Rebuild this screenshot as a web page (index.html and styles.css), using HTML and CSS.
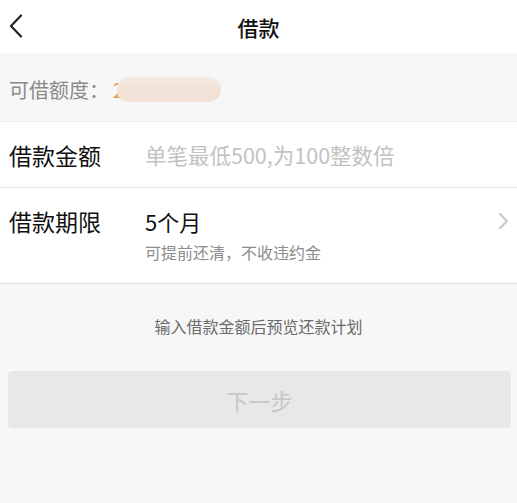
FILE: index.html
```html
<!DOCTYPE html>
<html lang="zh-CN">
<head>
    <meta charset="UTF-8">
    <meta name="viewport" content="width=device-width, initial-scale=1.0">
    <title>借款</title>
    <link rel="stylesheet" href="styles.css">
</head>
<body>
    <header class="nav">
        <span class="nav-back">
            <svg width="14" height="24" viewBox="0 0 14 24">
                <path d="M12 1.5 L2 12 L12 22.5" fill="none" stroke="#222" stroke-width="2.2" stroke-linecap="round" stroke-linejoin="round"/>
            </svg>
        </span>
        <h1 class="nav-title">借款</h1>
    </header>

    <div class="quota">
        <span class="quota-label">可借额度：</span>
        <span class="quota-value">
            <span class="quota-num">2</span>
            <span class="quota-blur"></span>
        </span>
    </div>

    <div class="form">
        <div class="row row-amount">
            <span class="row-label">借款金额</span>
            <span class="row-placeholder">单笔最低500,为100整数倍</span>
        </div>
        <div class="row row-term">
            <span class="row-label">借款期限</span>
            <div class="term-body">
                <div class="term-value">5个月</div>
                <div class="term-note">可提前还清，不收违约金</div>
            </div>
            <svg class="row-arrow" width="11" height="18" viewBox="0 0 11 18">
                <path d="M2 2 L9 9 L2 16" fill="none" stroke="#c6c6c6" stroke-width="2" stroke-linecap="round" stroke-linejoin="round"/>
            </svg>
        </div>
    </div>

    <p class="hint">输入借款金额后预览还款计划</p>

    <button class="next-btn">下一步</button>
</body>
</html>
```

FILE: styles.css
```css
body {
    margin: 0;
    background-color: #f7f7f7;
    font-family: "Noto Sans CJK SC", "Noto Sans", sans-serif;
    color: #111;
}
.nav {
    height: 53px;
    background-color: #fff;
    display: flex;
    align-items: center;
    justify-content: center;
    position: relative;
}
.nav-back {
    position: absolute;
    left: 9px;
    top: 14px;
}
.nav-title {
    margin: 0;
    font-size: 21px;
    font-weight: 500;
    color: #111;
}
.quota {
    height: 68px;
    display: flex;
    align-items: center;
    padding-left: 9px;
    padding-top: 4px;
    box-sizing: border-box;
}
.quota-label {
    font-size: 20px;
    color: #8a8a8a;
}
.quota-value {
    position: relative;
    display: inline-block;
    width: 112px;
    height: 25px;
}
.quota-num {
    position: absolute;
    left: 4px;
    top: -2px;
    font-size: 20px;
    color: #e8944e;
}
.quota-blur {
    position: absolute;
    left: 8px;
    top: 0;
    width: 104px;
    height: 25px;
    border-radius: 12px;
    background: linear-gradient(180deg, #f4ebe5 0%, #f1e1d5 60%, #f2e3d8 100%);
}
.form {
    background-color: #fff;
    border-top: 1px solid #ededed;
    border-bottom: 1px solid #e0e0e0;
}
.row {
    display: flex;
    padding-left: 9px;
}
.row-amount {
    height: 65px;
    align-items: center;
    border-bottom: 1px solid #e2e2e2;
}
.row-term {
    height: 95px;
    align-items: flex-start;
    padding-top: 17px;
    box-sizing: border-box;
}
.row-label {
    width: 136px;
    font-size: 23px;
    color: #111;
    flex-shrink: 0;
}
.row-placeholder {
    font-size: 21.5px;
    color: #c2c2c2;
}
.row-term .row-label {
    line-height: 32px;
}
.term-body {
    flex: 1;
}
.term-value {
    font-size: 22px;
    line-height: 32px;
    color: #111;
}
.term-note {
    margin-top: 3px;
    font-size: 16px;
    color: #8c8c8c;
}
.row-arrow {
    margin: 7px 8px 0 0;
}
.hint {
    margin: 30px 0 0;
    text-align: center;
    font-size: 16px;
    color: #6a6a6a;
}
.next-btn {
    display: block;
    width: calc(100% - 14px);
    margin: 33px 6px 0 8px;
    height: 57px;
    border: none;
    border-radius: 4px;
    background-color: #e8e8ea;
    color: #c6c6c6;
    font-family: "Noto Sans CJK SC", sans-serif;
    font-size: 22px;
}
```
